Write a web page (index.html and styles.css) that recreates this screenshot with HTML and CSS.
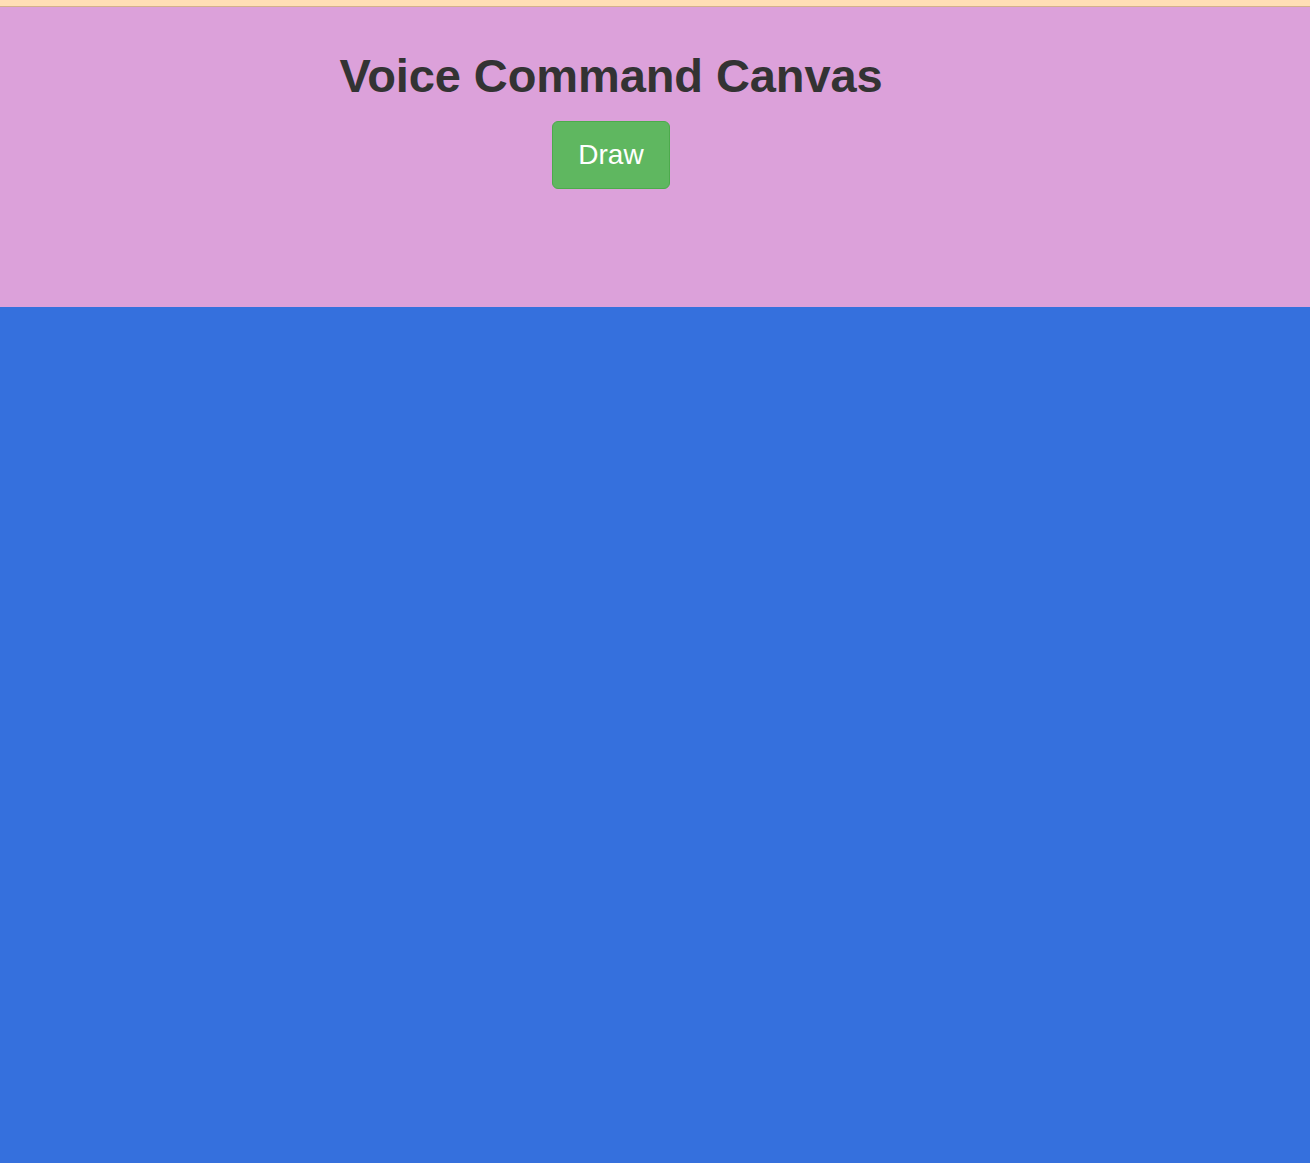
FILE: index.html
```html
<!DOCTYPE html>
<html lang="en">
<head>
<meta charset="utf-8">
<title>Voice Command Canvas</title>
<link rel="stylesheet" href="styles.css">
</head>
<body>
<div class="top-strip"></div>
<header class="header">
  <div class="header-inner">
    <h1 class="title">Voice Command Canvas</h1>
    <button class="draw-btn" type="button">Draw</button>
  </div>
</header>
<main class="canvas-area"></main>
</body>
</html>
```

FILE: styles.css
```css
html, body {
  margin: 0;
  padding: 0;
  height: 100%;
}
body {
  font-family: "Liberation Sans", Arial, Helvetica, sans-serif;
  background: #3570dd;
  display: flex;
  flex-direction: column;
  min-height: 1163px;
}
.top-strip {
  height: 6px;
  background: #ffdeb5;
}
.header {
  background: #dca1da;
  border-top: 1px solid #d4b08c;
  height: 301px;
  box-sizing: border-box;
}
.header-inner {
  width: 1222px;
  display: flex;
  flex-direction: column;
  align-items: center;
  padding-top: 41px;
}
.title {
  margin: 0;
  font-size: 47px;
  line-height: 56px;
  font-weight: bold;
  color: #333333;
  letter-spacing: -0.1px;
}
.draw-btn {
  margin-top: 17px;
  width: 118px;
  height: 68px;
  background: #5fb760;
  border: 1px solid #4cab4c;
  border-radius: 6px;
  color: #ffffff;
  font-family: "Liberation Sans", Arial, Helvetica, sans-serif;
  font-size: 28px;
  padding: 0;
  cursor: pointer;
}
.canvas-area {
  flex: 1;
  background: #3570dd;
}
```
